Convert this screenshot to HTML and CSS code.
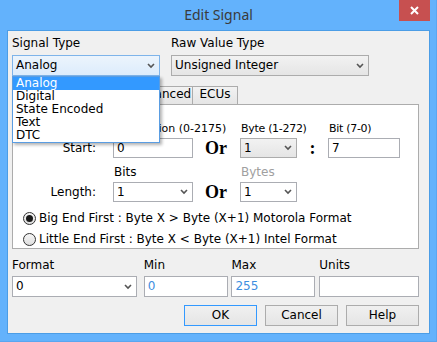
FILE: index.html
```html
<!DOCTYPE html>
<html>
<head>
<meta charset="utf-8">
<link rel="stylesheet" href="styles.css">
</head>
<body>
<div class="window">
  <div class="titlebar">
    <span></span>
    <span class="title">Edit Signal</span>
    <span class="close"><svg width="9" height="9" viewBox="0 0 9 9"><path d="M1 1 L8 8 M8 1 L1 8" stroke="#fff" stroke-width="2" fill="none"/></svg></span>
  </div>
  <div class="client">
    <div class="top-row">
      <div class="field w-sig">
        <div class="lbl">Signal Type</div>
        <div class="combo hot"><span>Analog</span><svg class="chev" width="8" height="6" viewBox="0 0 8 6"><path d="M1 1 L4 4 L7 1" stroke="#555" stroke-width="1.6" fill="none"/></svg></div>
      </div>
      <div class="field w-raw">
        <div class="lbl">Raw Value Type</div>
        <div class="combo"><span>Unsigned Integer</span><svg class="chev" width="8" height="6" viewBox="0 0 8 6"><path d="M1 1 L4 4 L7 1" stroke="#555" stroke-width="1.6" fill="none"/></svg></div>
      </div>
    </div>
    <div class="tabs">
      <div class="tab sel"></div>
      <div class="tab t-adv">Advanced</div>
      <div class="tab t-ecu">ECUs</div>
    </div>
    <div class="panel">
      <div class="pgrid">
        <div class="hl c2 num">Bit Position (0-2175)</div>
        <div class="hl c4 num tight">Byte (1-272)</div>
        <div class="hl c6 num tight">Bit (7-0)</div>
        <div class="rl">Start:</div>
        <div class="input">0</div>
        <div class="or">Or</div>
        <div class="combo"><span>1</span><svg class="chev" width="8" height="6" viewBox="0 0 8 6"><path d="M1 1 L4 4 L7 1" stroke="#555" stroke-width="1.6" fill="none"/></svg></div>
        <div class="colon">:</div>
        <div class="input">7</div>
        <div class="hl c2">Bits</div>
        <div class="hl c4 dis">Bytes</div>
        <div class="rl">Length:</div>
        <div class="combo white"><span>1</span><svg class="chev" width="8" height="6" viewBox="0 0 8 6"><path d="M1 1 L4 4 L7 1" stroke="#555" stroke-width="1.6" fill="none"/></svg></div>
        <div class="or">Or</div>
        <div class="combo white"><span>1</span><svg class="chev" width="8" height="6" viewBox="0 0 8 6"><path d="M1 1 L4 4 L7 1" stroke="#555" stroke-width="1.6" fill="none"/></svg></div>
      </div>
      <div class="radios">
        <div class="radio-row"><span class="radio on"></span><span>Big End First : Byte X &gt; Byte (X+1) Motorola Format</span></div>
        <div class="radio-row"><span class="radio"></span><span>Little End First : Byte X &lt; Byte (X+1) Intel Format</span></div>
      </div>
    </div>
    <div class="bottom-row">
      <div class="field w-fmt">
        <div class="lbl">Format</div>
        <div class="combo white"><span>0</span><svg class="chev" width="8" height="6" viewBox="0 0 8 6"><path d="M1 1 L4 4 L7 1" stroke="#555" stroke-width="1.6" fill="none"/></svg></div>
      </div>
      <div class="field w-min">
        <div class="lbl">Min</div>
        <div class="input tall blue">0</div>
      </div>
      <div class="field w-max">
        <div class="lbl">Max</div>
        <div class="input tall blue">255</div>
      </div>
      <div class="field w-units">
        <div class="lbl">Units</div>
        <div class="input tall"></div>
      </div>
    </div>
    <div class="buttons">
      <div class="btn def">OK</div>
      <div class="btn">Cancel</div>
      <div class="btn">Help</div>
    </div>
    <ul class="droplist">
      <li class="cur">Analog</li>
      <li>Digital</li>
      <li>State Encoded</li>
      <li>Text</li>
      <li>DTC</li>
    </ul>
  </div>
</div>
</body>
</html>
```
FILE: styles.css
```css
* { box-sizing: border-box; }
html, body { margin: 0; padding: 0; }
body { width: 437px; height: 342px; overflow: hidden; }
.window {
  width: 437px; height: 342px;
  background: #63b2fc;
  border-right: 1px solid #5aa6f0;
  border-bottom: 1px solid #5aa6f0;
}
.titlebar {
  height: 30px;
  display: grid;
  grid-template-columns: 1fr auto 1fr;
  align-items: start;
}
.title {
  font-family: "Noto Sans", "DejaVu Sans", sans-serif;
  font-size: 14px;
  color: #3a3a3a;
  line-height: 30px;
  padding-left: 1px;
}
.close {
  justify-self: end;
  margin-right: 6px;
  width: 31px; height: 21px;
  background: #c75050;
  display: flex; align-items: center; justify-content: center;
}
.close svg { display: block; }
.client {
  position: relative;
  margin: 0 6px 0 7px;
  height: 304px;
  background: #f0f0f0;
  border: 1px solid #4b9de6;
  padding: 6px 10px 0 4px;
  font-family: "DejaVu Sans", sans-serif;
  font-size: 12px;
  line-height: 13px;
  color: #000;
}
.top-row { display: flex; gap: 11px; }
.field { display: flex; flex-direction: column; gap: 5px; }
.w-sig { width: 148px; }
.w-raw { width: 198px; }
.lbl { height: 13px; white-space: nowrap; }
.combo {
  height: 21px;
  border: 1px solid #acacac;
  background: linear-gradient(#f2f2f2, #e5e5e5);
  display: flex; align-items: center; justify-content: space-between;
  padding: 0 4px 0 3px;
  white-space: nowrap;
}
.combo.hot { border-color: #7eb4ea; background: linear-gradient(#ecf4fc, #dcecfc); }
.combo.white { background: #fff; border-color: #abadb3; }
.chev { display: block; flex: none; }
.tabs { display: flex; margin-top: 10px; height: 18px; }
.tab {
  height: 18px;
  border: 1px solid #acacac;
  border-bottom: none;
  background: linear-gradient(#f2f2f2, #e5e5e5);
  padding: 1px 0 0;
  text-align: center;
  white-space: nowrap;
  margin-right: -1px;
}
.tab.sel { background: #fff; width: 119px; }
.t-adv { width: 63px; }
.t-ecu { width: 46px; }
.panel {
  width: 407px; height: 145px;
  background: #fff;
  border: 1px solid #acacac;
  padding-top: 17px;
}
.pgrid {
  display: grid;
  grid-template-columns: 100px 80px 47px 57px 31px 72px;
  grid-template-rows: 16px 20px 24px 20px;
  align-items: center;
}
.hl { align-self: end; margin-bottom: 3px; white-space: nowrap; padding-left: 1px; }
.num { font-size: 11px; }
.tight { letter-spacing: -0.3px; }
.c2 { grid-column: 2; }
.c4 { grid-column: 4; }
.c6 { grid-column: 6; }
.dis { color: #a0a0a0; }
.rl { grid-column: 1; text-align: right; padding-right: 17px; }
.input {
  height: 20px;
  border: 1px solid #abadb3;
  background: #fff;
  padding: 0 3px;
  display: flex; align-items: center;
}
.input.tall { height: 21px; }
.input.blue { color: #3d8ee0; }
.pgrid .combo { height: 20px; }
.or {
  font-family: "Liberation Serif", serif;
  font-weight: bold;
  font-size: 18px;
  padding-left: 12px;
  line-height: 20px;
}
.colon {
  font-family: "Liberation Serif", serif;
  font-weight: bold;
  font-size: 18px;
  text-align: center;
  line-height: 20px;
}
.radios { margin-top: 8px; display: flex; flex-direction: column; gap: 4px; padding-left: 10px; }
.radio-row { display: flex; align-items: center; gap: 3px; height: 17px; white-space: nowrap; }
.radio {
  width: 13px; height: 13px; border-radius: 50%;
  border: 1px solid #333;
  background: linear-gradient(#f6f6f6, #dedede);
  display: flex; align-items: center; justify-content: center;
  flex: none;
}
.radio.on::after {
  content: ""; width: 7px; height: 7px; border-radius: 50%; background: #1a1a1a;
}
.bottom-row { display: flex; margin-top: 10px; }
.bottom-row .field { gap: 4px; }
.w-fmt { width: 125px; margin-right: 7px; }
.w-min { width: 85px; margin-right: 3px; }
.w-max { width: 84px; margin-right: 4px; }
.w-units { width: 100px; }
.w-fmt .combo { padding-right: 4px; }
.buttons { display: flex; justify-content: flex-end; gap: 8px; margin-top: 8px; padding-right: 0; }
.btn {
  width: 73px; height: 21px;
  border: 1px solid #acacac;
  background: linear-gradient(#f0f0f0, #e5e5e5);
  display: flex; align-items: center; justify-content: center;
}
.btn.def { border-color: #3399ff; }
.droplist {
  position: absolute;
  left: 4px; top: 45px;
  width: 148px;
  margin: 0; padding: 0;
  list-style: none;
  background: #fff;
  border: 1px solid #5a9de2;
  box-shadow: 2px 2px 3px rgba(0,0,0,0.3);
}
.droplist li { height: 13px; line-height: 13px; padding-left: 3px; }
.droplist li.cur { background: #3399ff; color: #fff; }
```
